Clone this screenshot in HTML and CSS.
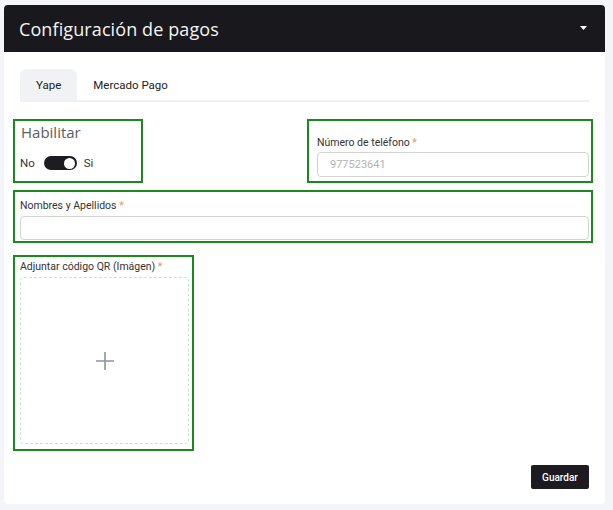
FILE: index.html
```html
<!DOCTYPE html>
<html lang="es">
<head>
<meta charset="utf-8">
<title>Configuración de pagos</title>
<link rel="stylesheet" href="styles.css">
</head>
<body>
<div class="card">
  <div class="card-header">
    <h1 class="card-title">Configuración de pagos</h1>
    <svg class="caret" width="7" height="4" viewBox="0 0 7 4"><path d="M0 0H7L3.5 4Z" fill="#fff"/></svg>
  </div>
  <div class="card-body">
    <div class="tabs">
      <div class="tab active">Yape</div>
      <div class="tab">Mercado Pago</div>
    </div>
    <div class="form">
      <div class="row-top">
        <div class="group group-enable">
          <div class="enable-title">Habilitar</div>
          <div class="switch-row">
            <span>No</span>
            <span class="switch"><span class="knob"></span></span>
            <span>Si</span>
          </div>
        </div>
        <div class="group group-phone">
          <label class="label">Número de teléfono <span class="req">*</span></label>
          <div class="input input-phone"><span class="placeholder">977523641</span></div>
        </div>
      </div>
      <div class="group group-name">
        <label class="label">Nombres y Apellidos <span class="req">*</span></label>
        <div class="input"></div>
      </div>
      <div class="group group-qr">
        <label class="label">Adjuntar código QR (Imágen) <span class="req">*</span></label>
        <div class="dropzone">
          <svg width="20" height="20" viewBox="0 0 20 20"><path d="M10 1V19M1 10H19" stroke="#8d93a0" stroke-width="1.6" fill="none"/></svg>
        </div>
      </div>
    </div>
    <div class="actions">
      <button class="btn">Guardar</button>
    </div>
  </div>
</div>
</body>
</html>
```

FILE: styles.css
```css
* { box-sizing: border-box; }
html, body { margin: 0; }
body {
  background: #f4f5f8;
  padding: 5px 8px 6px 4px;
  font-family: Roboto, "Liberation Sans", sans-serif;
  color: #333;
}
.card {
  background: #fff;
  border-radius: 4px;
  width: 601px;
  height: 499px;
  display: flex;
  flex-direction: column;
}
.card-header {
  height: 47px;
  background: #19191d;
  border-radius: 4px 4px 0 0;
  display: flex;
  align-items: center;
  justify-content: space-between;
  padding: 0 18px 0 15px;
}
.card-title {
  margin: 0;
  font-family: "Open Sans", sans-serif;
  font-weight: 400;
  font-size: 18px;
  color: #f4f4f4;
  letter-spacing: 0.1px;
}
.caret { display: block; margin-top: -2px; }
.card-body {
  flex: 1;
  padding: 17px 16px 15px 16px;
  display: flex;
  flex-direction: column;
}
.tabs {
  display: flex;
  border-bottom: 2px solid #eef0f3;
  height: 33px;
}
.tab {
  height: 31px;
  padding: 0 16px;
  display: flex;
  align-items: center;
  font-size: 11.5px;
  color: #222;
  border-radius: 6px 6px 0 0;
}
.tab.active { background: #f0f2f4; }
.form {
  margin: 17px -4px 0 -7px;
  display: flex;
  flex-direction: column;
}
.row-top {
  display: grid;
  grid-template-columns: 130px 1fr 286px;
}
.group {
  border: 2px solid #1a8a1d;
}
.group-enable {
  grid-column: 1;
  height: 64px;
  padding: 2px 0 0 6px;
}
.enable-title {
  font-family: "Open Sans", sans-serif;
  font-size: 15px;
  line-height: 18px;
  color: #5e5e5e;
}
.switch-row {
  margin-top: 13px;
  height: 18px;
  display: flex;
  align-items: center;
  font-size: 11.5px;
  color: #333;
  margin-left: -1px;
}
.switch {
  width: 33px;
  height: 14px;
  border-radius: 7px;
  background: #1c1c21;
  margin: 0 7px 0 9px;
  position: relative;
}
.knob {
  position: absolute;
  right: 1.5px;
  top: 1.5px;
  width: 11px;
  height: 11px;
  border-radius: 50%;
  background: #fff;
}
.group-phone {
  grid-column: 3;
  height: 64px;
  padding: 15px 2px 0 8px;
}
.label {
  display: block;
  font-size: 10.5px;
  line-height: 14px;
  color: #333;
}
.req { color: #f0933b; }
.input {
  height: 24px;
  border: 1px solid #d3d3d3;
  border-radius: 4px;
  margin-top: 2px;
  display: flex;
  align-items: center;
  padding: 0 12px;
}
.input-phone { height: 25px; }
.placeholder { font-size: 11px; color: #b3b3b3; }
.group-name {
  margin-top: 7px;
  height: 53px;
  padding: 7px 2px 0 5px;
}
.group-name .input { margin-top: 3px; }
.group-qr {
  margin-top: 12px;
  width: 181px;
  height: 196px;
  padding: 3px 3px 0 5px;
}
.dropzone {
  margin-top: 3px;
  height: 167px;
  border: 1px dashed #d9d9d9;
  border-radius: 4px;
  display: flex;
  align-items: center;
  justify-content: center;
}
.actions {
  margin-top: auto;
  display: flex;
  justify-content: flex-end;
}
.btn {
  width: 58px;
  height: 24px;
  border: 0;
  border-radius: 2px;
  background: #1c1b20;
  color: #fff;
  font-family: Roboto, sans-serif;
  font-size: 10px;
  font-weight: 500;
  padding: 0;
}
```
